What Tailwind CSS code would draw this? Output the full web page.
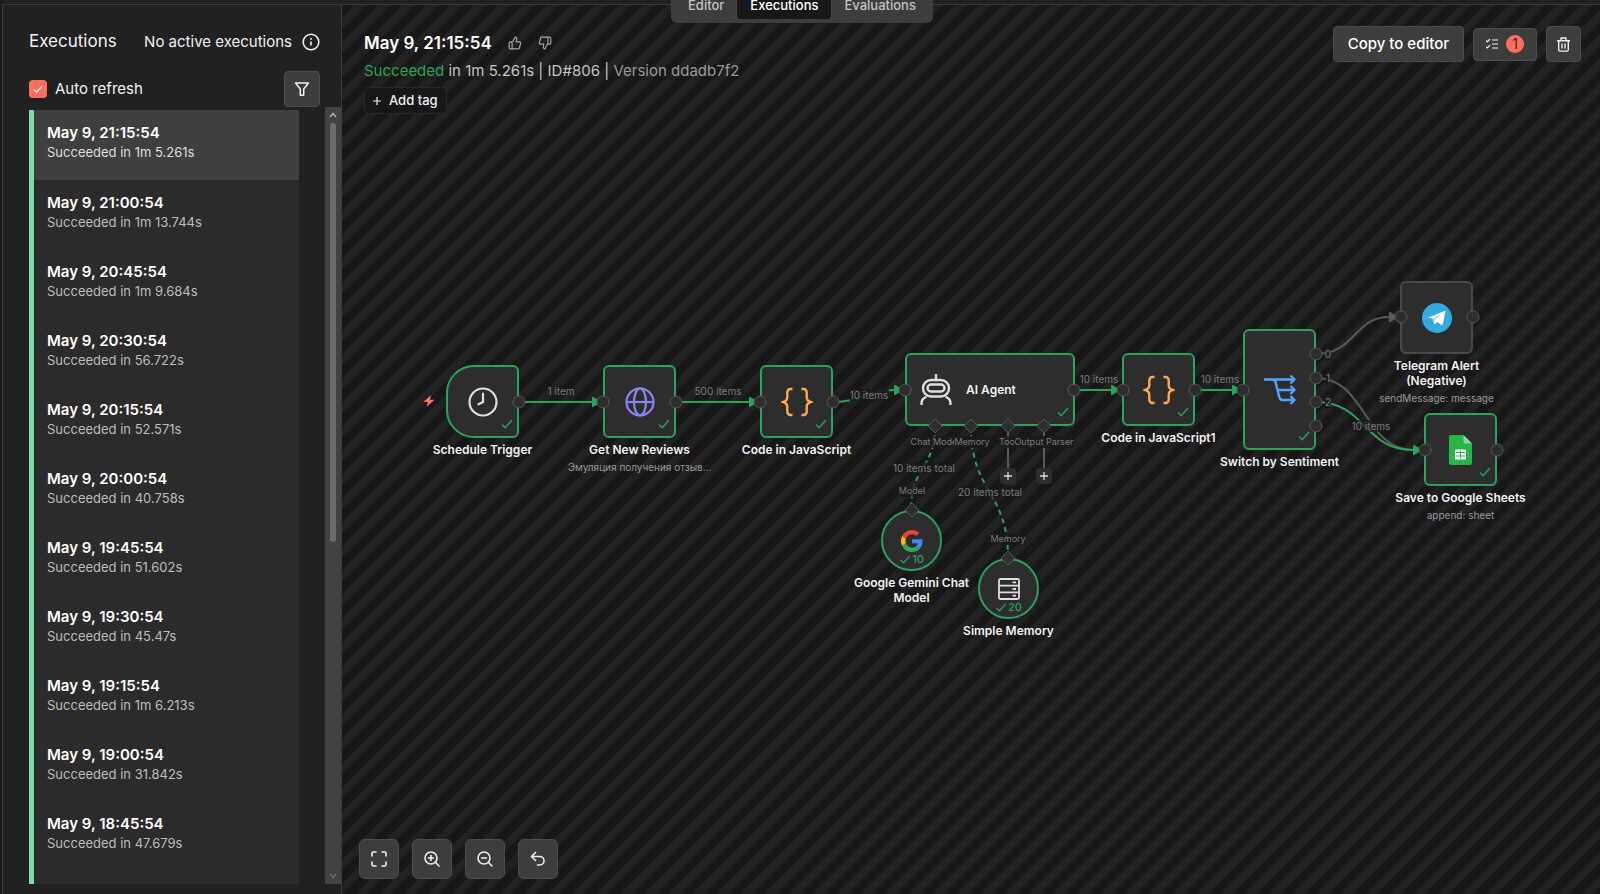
<!DOCTYPE html>
<html lang="en">
  <head>
    <meta charset="UTF-8" />
    <meta name="viewport" content="width=device-width, initial-scale=1.0" />
    <title>Executions</title>
    <script src="https://cdn.jsdelivr.net/npm/@tailwindcss/browser@4"></script>
  </head>
  <body
    class="h-screen overflow-hidden flex flex-col bg-[#212121] text-[#f0f0f0] font-['Inter',sans-serif] border-l-2 border-[#1b1b1b]"
  >
    <!-- icons shared by several elements -->
    <svg class="hidden">
      <symbol id="check" viewBox="0 0 12 12">
        <path d="M1 6.5l3.2 3.2L11 2" fill="none" stroke="currentColor" stroke-width="1.4" />
      </symbol>
      <symbol id="braces" viewBox="0 0 32 32">
        <path
          d="M11.5 3H9.5a3.2 3.2 0 0 0-3.2 3.2V11c0 2.5-1.3 4.2-4 5 2.7.8 4 2.500 4 5v4.8A3.2 3.2 0 0 0 9.5 29h2M20.5 3h2a3.2 3.2 0 0 1 3.2 3.2V11c0 2.5 1.3 4.2 4 5-2.7.8-4 2.5-4 5v4.8a3.2 3.2 0 0 1-3.2 3.2h-2"
          fill="none"
          stroke="currentColor"
          stroke-width="2.4"
        />
      </symbol>
    </svg>

    <header class="relative z-20 h-[5px] shrink-0 border-b border-[#3c3c3c]">
      <nav
        class="absolute bottom-[-19px] left-[669px] flex items-end rounded-md bg-[#3d3d3d] p-1 text-[13px] leading-5 font-medium text-[#c2c2c2]"
      >
        <a href="#editor" class="px-[13px] py-1">Editor</a>
        <a href="#executions" class="rounded bg-[#171717] px-[13px] py-1 text-white">Executions</a>
        <a href="#evaluations" class="px-[13px] py-1">Evaluations</a>
      </nav>
    </header>

    <div class="flex min-h-0 flex-1">
      <aside class="flex w-[340px] shrink-0 flex-col border-x border-[#3c3c3c] pb-[10px] pl-[26px]">
        <div class="mt-6 flex h-[26px] items-center justify-between pr-[21px]">
          <h1 class="text-[17px]">Executions</h1>
          <div class="flex items-center gap-2.5 text-[15px]">
            <span>No active executions</span>
            <svg class="size-[18px]" viewBox="0 0 18 18" fill="none" stroke="currentColor" stroke-width="1.6">
              <circle cx="9" cy="9" r="7.8" />
              <path d="M9 8.5v4M9 5v1.7" />
            </svg>
          </div>
        </div>

        <div class="mt-4 mb-[3px] flex h-9 items-center justify-between pr-[21px]">
          <label for="auto-refresh" class="flex items-center gap-2 text-[15px]">
            <span class="relative flex size-[18px]">
              <input
                type="checkbox"
                id="auto-refresh"
                checked
                class="size-[18px] appearance-none rounded bg-[#ff6f5c]"
              />
              <svg class="pointer-events-none absolute inset-1 size-2.5 text-white" viewBox="0 0 12 12">
                <path d="M1 6.5l3.2 3.2L11 2.5" fill="none" stroke="currentColor" stroke-width="1.5" />
              </svg>
            </span>
            Auto refresh
          </label>
          <button
            aria-label="Filter"
            class="flex size-9 items-center justify-center rounded border border-[#4d4d4d] bg-[#3d3d3d]"
          >
            <svg class="size-4" viewBox="0 0 16 16" fill="none" stroke="currentColor" stroke-width="1.5" stroke-linejoin="round">
              <path d="M1.500 2h13L9.700 8v6.200H6.300V8z" />
            </svg>
          </button>
        </div>

        <div class="flex min-h-0 flex-1 justify-between">
          <ul class="w-[270px] overflow-hidden border-l-[5px] border-[#7fdca4] bg-[#2b2b2b] text-[13px] leading-[18px] text-[#bdbdbd]">
            <li class="h-[70px] bg-[#3f3f3f] pt-[13px] pl-[13px] text-[#dedede]">
              <a href="#e806" class="block">
                <b class="block text-[15px] leading-5 font-semibold text-white">May 9, 21:15:54</b>
                <span class="block">Succeeded in 1m 5.261s</span>
              </a>
            </li>
            <li class="h-[69px] pt-[13px] pl-[13px]">
              <a href="#e805" class="block">
                <b class="block text-[15px] leading-5 font-semibold text-white">May 9, 21:00:54</b>
                <span class="block">Succeeded in 1m 13.744s</span>
              </a>
            </li>
            <li class="h-[69px] pt-[13px] pl-[13px]">
              <a href="#e804" class="block">
                <b class="block text-[15px] leading-5 font-semibold text-white">May 9, 20:45:54</b>
                <span class="block">Succeeded in 1m 9.684s</span>
              </a>
            </li>
            <li class="h-[69px] pt-[13px] pl-[13px]">
              <a href="#e803" class="block">
                <b class="block text-[15px] leading-5 font-semibold text-white">May 9, 20:30:54</b>
                <span class="block">Succeeded in 56.722s</span>
              </a>
            </li>
            <li class="h-[69px] pt-[13px] pl-[13px]">
              <a href="#e802" class="block">
                <b class="block text-[15px] leading-5 font-semibold text-white">May 9, 20:15:54</b>
                <span class="block">Succeeded in 52.571s</span>
              </a>
            </li>
            <li class="h-[69px] pt-[13px] pl-[13px]">
              <a href="#e801" class="block">
                <b class="block text-[15px] leading-5 font-semibold text-white">May 9, 20:00:54</b>
                <span class="block">Succeeded in 40.758s</span>
              </a>
            </li>
            <li class="h-[69px] pt-[13px] pl-[13px]">
              <a href="#e800" class="block">
                <b class="block text-[15px] leading-5 font-semibold text-white">May 9, 19:45:54</b>
                <span class="block">Succeeded in 51.602s</span>
              </a>
            </li>
            <li class="h-[69px] pt-[13px] pl-[13px]">
              <a href="#e799" class="block">
                <b class="block text-[15px] leading-5 font-semibold text-white">May 9, 19:30:54</b>
                <span class="block">Succeeded in 45.47s</span>
              </a>
            </li>
            <li class="h-[69px] pt-[13px] pl-[13px]">
              <a href="#e798" class="block">
                <b class="block text-[15px] leading-5 font-semibold text-white">May 9, 19:15:54</b>
                <span class="block">Succeeded in 1m 6.213s</span>
              </a>
            </li>
            <li class="h-[69px] pt-[13px] pl-[13px]">
              <a href="#e797" class="block">
                <b class="block text-[15px] leading-5 font-semibold text-white">May 9, 19:00:54</b>
                <span class="block">Succeeded in 31.842s</span>
              </a>
            </li>
            <li class="h-[69px] pt-[13px] pl-[13px]">
              <a href="#e796" class="block">
                <b class="block text-[15px] leading-5 font-semibold text-white">May 9, 18:45:54</b>
                <span class="block">Succeeded in 47.679s</span>
              </a>
            </li>
          </ul>
          <!-- scroll bar -->
          <div class="-mt-[3px] flex w-4 flex-col items-center justify-between bg-[#424242] py-1">
            <div class="flex h-[56%] w-full flex-col items-center gap-1">
              <svg class="h-2 w-2 shrink-0" viewBox="0 0 8 8" fill="none" stroke="#b0b0b0" stroke-width="1.5"><path d="M1 6l3-3.500L7 6" /></svg>
              <div class="w-1.5 flex-1 rounded-full bg-[#6b6b6b]"></div>
            </div>
            <svg class="h-2 w-2" viewBox="0 0 8 8" fill="none" stroke="#6b6b6b" stroke-width="1.5"><path d="M1 2l3 3.500L7 2" /></svg>
          </div>
        </div>
      </aside>

      <main
        class="relative flex min-w-0 flex-1 flex-col justify-between overflow-hidden bg-[repeating-linear-gradient(135deg,#171717_0px,#171717_9px,#212121_9px,#212121_17px)]"
      >
        <div class="relative z-10 flex items-start justify-between pt-[21px] pr-[19px] pl-[22px]">
          <div>
            <div class="mt-[3px] flex h-7 items-center">
              <h2 class="text-[17px] leading-7 font-semibold text-white">May 9, 21:15:54</h2>
              <button aria-label="Good run" class="ml-4 text-[#a8a8a8]">
                <svg class="size-3.5" viewBox="0 0 24 24" fill="none" stroke="currentColor" stroke-width="2" stroke-linejoin="round">
                  <path d="M7 10v12M15 5.88 14 10h5.83a2 2 0 0 1 1.92 2.56l-2.33 8A2 2 0 0 1 17.5 22H4a2 2 0 0 1-2-2v-8a2 2 0 0 1 2-2h2.76a2 2 0 0 0 1.79-1.11L12 2a3.13 3.13 0 0 1 3 3.88Z" />
                </svg>
              </button>
              <button aria-label="Bad run" class="ml-4 text-[#a8a8a8]">
                <svg class="size-3.5" viewBox="0 0 24 24" fill="none" stroke="currentColor" stroke-width="2" stroke-linejoin="round">
                  <path d="M17 14V2M9 18.12 10 14H4.17a2 2 0 0 1-1.92-2.56l2.33-8A2 2 0 0 1 6.5 2H20a2 2 0 0 1 2 2v8a2 2 0 0 1-2 2h-2.76a2 2 0 0 0-1.79 1.11L12 22a3.13 3.13 0 0 1-3-3.88Z" />
                </svg>
              </button>
            </div>
            <p class="text-[15px] leading-7 text-[#c4c4c4]">
              <span class="text-[#27a35a]">Succeeded</span> in 1m 5.261s | ID#806 |
              <span class="text-[#9a9a9a]">Version ddadb7f2</span>
            </p>
            <button
              class="mt-[2px] flex h-[27px] items-center gap-2 rounded border border-[#292929] bg-[#171717] px-2 text-[13px] font-medium"
            >
              <svg class="size-2" viewBox="0 0 8 8" stroke="currentColor" stroke-width="1.2"><path d="M4 0v8M0 4h8" /></svg>
              Add tag
            </button>
          </div>
          <div class="flex items-center gap-[9px]">
            <button class="h-9 rounded border border-[#4d4d4d] bg-[#3d3d3d] px-3.5 text-[15px] font-medium text-white">
              Copy to editor
            </button>
            <button
              aria-label="Annotations"
              class="flex h-[33px] w-16 items-center justify-center gap-2 rounded border border-[#4d4d4d] bg-[#3d3d3d]"
            >
              <svg class="size-3" viewBox="0 0 12 12" fill="none" stroke="currentColor" stroke-width="1.2">
                <path d="M0 2.500l1.300 1.300L4 1M0 8.700L1.300 10 4 7.200M6 2h6M6 6h6M6 10h6" />
              </svg>
              <span class="flex size-[18px] items-center justify-center rounded-full bg-[#ff6f5c] text-sm text-[#3d2320]">1</span>
            </button>
            <button
              aria-label="Delete"
              class="flex h-9 w-[35px] items-center justify-center rounded border border-[#4d4d4d] bg-[#3d3d3d]"
            >
              <svg class="size-[15px]" viewBox="0 0 15 15" fill="none" stroke="currentColor" stroke-width="1.4" stroke-linejoin="round">
                <path d="M1 3.700h13M5 3.500V1h5v2.500M2.700 3.700v9a1.400 1.400 0 0 0 1.400 1.400h6.800a1.400 1.400 0 0 0 1.400-1.400v-9M6 6.500v5M9 6.500v5" />
              </svg>
            </button>
          </div>
        </div>

        <!-- workflow canvas -->
        <section class="absolute inset-0 text-[10px] leading-3 text-[#7c7c7c]">
          <!-- connections -->
          <svg class="absolute inset-0 h-full w-full" fill="none" stroke-width="2">
            <defs>
              <marker id="arrow-green" viewBox="0 0 9 11" markerWidth="9" markerHeight="11" refX="0" refY="5.5" markerUnits="userSpaceOnUse" orient="0">
                <path d="M0 1q0-1.200 1-.6l7.200 4.200q1 .9 0 1.800L1 10.600q-1 .6-1-.6z" fill="#27a35a" stroke="none" />
              </marker>
              <marker id="arrow-gray" viewBox="0 0 9 11" markerWidth="9" markerHeight="11" refX="0" refY="5.5" markerUnits="userSpaceOnUse" orient="0">
                <path d="M0 1q0-1.200 1-.6l7.200 4.200q1 .9 0 1.800L1 10.600q-1 .6-1-.6z" fill="#5a5a5a" stroke="none" />
              </marker>
            </defs>
            <g stroke="#5a5a5a">
              <path d="M974 349C1013 349 1012 312 1047 312" marker-end="url(#arrow-gray)" />
              <path d="M974 373C1024 373 1022 445 1071 445" />
              <path d="M666 427v37M702 427v37" />
            </g>
            <g stroke="#27a35a">
              <path d="M177 397h73" marker-end="url(#arrow-green)" />
              <path d="M333 397h74" marker-end="url(#arrow-green)" />
              <path d="M491 397C521 397 523 385 552 385" marker-end="url(#arrow-green)" />
              <path d="M732 385h37" marker-end="url(#arrow-green)" />
              <path d="M853 385h37" marker-end="url(#arrow-green)" />
              <path d="M974 397C1024 397 1022 445 1071 445" marker-end="url(#arrow-green)" />
              <path d="M593 421C593 464 569 461 569 505M629 421C629 489 666 485 666 553" stroke-dasharray="5 4" />
            </g>
          </svg>

          <!-- labels on the connections -->
          <div class="absolute top-[380px] left-[219px] -translate-x-1/2 whitespace-nowrap">1 item</div>
          <div class="absolute top-[380px] left-[376px] -translate-x-1/2 whitespace-nowrap">500 items</div>
          <div class="absolute top-[384px] left-[527px] -translate-x-1/2 bg-[#1a1a1a]/90 whitespace-nowrap">10 items</div>
          <div class="absolute top-[368px] left-[757px] -translate-x-1/2 whitespace-nowrap">10 items</div>
          <div class="absolute top-[368px] left-[878px] -translate-x-1/2 whitespace-nowrap">10 items</div>
          <div class="absolute top-[415px] left-[1029px] -translate-x-1/2 bg-[#1a1a1a]/70 whitespace-nowrap">10 items</div>
          <div class="absolute top-[343px] left-[986px] -translate-x-1/2 bg-[#1a1a1a]/90">0</div>
          <div class="absolute top-[367px] left-[986px] -translate-x-1/2 bg-[#1a1a1a]/90">1</div>
          <div class="absolute top-[391px] left-[986px] -translate-x-1/2 bg-[#1a1a1a]/90">2</div>
          <div class="absolute top-[431px] left-[593px] -translate-x-1/2 bg-[#1a1a1a]/80 text-[9px] whitespace-nowrap">Chat Model</div>
          <div class="absolute top-[431px] left-[666px] -translate-x-1/2 bg-[#1a1a1a]/80 text-[9px] whitespace-nowrap">Tool</div>
          <div class="absolute top-[431px] left-[630px] -translate-x-1/2 bg-[#1a1a1a] text-[9px] whitespace-nowrap">Memory</div>
          <div class="absolute top-[431px] left-[702px] -translate-x-1/2 bg-[#1a1a1a] text-[9px] whitespace-nowrap">Output Parser</div>
          <div class="absolute top-[457px] left-[582px] -translate-x-1/2 bg-[#1a1a1a]/70 whitespace-nowrap">10 items total</div>
          <div class="absolute top-[480px] left-[570px] -translate-x-1/2 bg-[#1a1a1a]/70 text-[9px] whitespace-nowrap">Model</div>
          <div class="absolute top-[481px] left-[648px] -translate-x-1/2 bg-[#1a1a1a]/70 whitespace-nowrap">20 items total</div>
          <div class="absolute top-[528px] left-[666px] -translate-x-1/2 bg-[#1a1a1a]/70 text-[9px] whitespace-nowrap">Memory</div>

          <button aria-label="Add tool" class="absolute top-[463px] left-[658px] flex size-4 items-center justify-center rounded-sm bg-[#2d2d2d] text-[#dcdcdc]">
            <svg class="size-2" viewBox="0 0 8 8" stroke="currentColor" stroke-width="1.3"><path d="M4 0v8M0 4h8" /></svg>
          </button>
          <button aria-label="Add output parser" class="absolute top-[463px] left-[694px] flex size-4 items-center justify-center rounded-sm bg-[#2d2d2d] text-[#dcdcdc]">
            <svg class="size-2" viewBox="0 0 8 8" stroke="currentColor" stroke-width="1.3"><path d="M4 0v8M0 4h8" /></svg>
          </button>

          <!-- Schedule Trigger -->
          <svg class="absolute top-[390px] left-[81px] size-3" viewBox="0 0 12 12" fill="#ff6f5c"><path d="M8 0L.5 7h4.300L3.500 12l8-7.200H7z" /></svg>
          <div class="absolute top-[360px] left-[104px] flex size-[73px] items-center justify-center rounded-l-[28px] rounded-r-md border-2 border-[#27a35a] bg-[#2d2d2d]">
            <svg class="size-[30px]" viewBox="0 0 30 30" fill="none" stroke="#dedede" stroke-width="2.2" stroke-linecap="round">
              <circle cx="15" cy="15" r="13.5" />
              <path d="M15 6.500V15l-4.500 2.300" />
            </svg>
            <svg class="absolute right-1 bottom-1.5 size-3 text-[#27a35a]"><use href="#check" /></svg>
            <div class="absolute top-full left-1/2 mt-1.5 -translate-x-1/2 text-center text-xs leading-4 font-semibold whitespace-nowrap text-[#f0f0f0]">Schedule Trigger</div>
          </div>

          <!-- Get New Reviews -->
          <div class="absolute top-[360px] left-[261px] flex size-[73px] items-center justify-center rounded-md border-2 border-[#27a35a] bg-[#2d2d2d]">
            <svg class="size-[30px]" viewBox="0 0 30 30" fill="none" stroke="#8686f5" stroke-width="2.2">
              <circle cx="15" cy="15" r="13.5" />
              <ellipse cx="15" cy="15" rx="6" ry="13.5" />
              <path d="M1.500 15h27" />
            </svg>
            <svg class="absolute right-1 bottom-1.5 size-3 text-[#27a35a]"><use href="#check" /></svg>
            <div class="absolute top-full left-1/2 mt-1.5 -translate-x-1/2 text-center text-xs leading-4 font-semibold whitespace-nowrap text-[#f0f0f0]">
              Get New Reviews
              <div class="mt-[3px] text-[10px] leading-3 font-normal text-[#9a9a9a]">Эмуляция получения отзыв...</div>
            </div>
          </div>

          <!-- Code in JavaScript -->
          <div class="absolute top-[360px] left-[418px] flex size-[73px] items-center justify-center rounded-md border-2 border-[#27a35a] bg-[#2d2d2d]">
            <svg class="size-8 text-[#ffa94d]"><use href="#braces" /></svg>
            <svg class="absolute right-1 bottom-1.5 size-3 text-[#27a35a]"><use href="#check" /></svg>
            <div class="absolute top-full left-1/2 mt-1.5 -translate-x-1/2 text-center text-xs leading-4 font-semibold whitespace-nowrap text-[#f0f0f0]">Code in JavaScript</div>
          </div>

          <!-- AI Agent -->
          <div class="absolute top-[348px] left-[563px] flex h-[73px] w-[170px] items-center gap-[14px] rounded-md border-2 border-[#27a35a] bg-[#2d2d2d] pl-[13px]">
            <svg class="size-8" viewBox="0 0 32 32" fill="none" stroke="#dedede" stroke-width="2.4">
              <path d="M16 0v6M1.500 31v-1.500a7 7 0 0 1 5-6.700M30.500 31v-1.500a7 7 0 0 0-5-6.700" />
              <rect x="3" y="6" width="26" height="16.5" rx="8.2" />
              <rect x="7.5" y="10.5" width="17" height="7" rx="3.5" />
            </svg>
            <span class="text-xs leading-4 font-semibold text-[#f0f0f0]">AI Agent</span>
            <svg class="absolute right-1 bottom-1.5 size-3 text-[#27a35a]"><use href="#check" /></svg>
          </div>

          <!-- Code in JavaScript1 -->
          <div class="absolute top-[348px] left-[780px] flex size-[73px] items-center justify-center rounded-md border-2 border-[#27a35a] bg-[#2d2d2d]">
            <svg class="size-8 text-[#ffa94d]"><use href="#braces" /></svg>
            <svg class="absolute right-1 bottom-1.5 size-3 text-[#27a35a]"><use href="#check" /></svg>
            <div class="absolute top-full left-1/2 mt-1.5 -translate-x-1/2 text-center text-xs leading-4 font-semibold whitespace-nowrap text-[#f0f0f0]">Code in JavaScript1</div>
          </div>

          <!-- Switch by Sentiment -->
          <div class="absolute top-[324px] left-[901px] flex h-[121px] w-[73px] items-center justify-center rounded-md border-2 border-[#27a35a] bg-[#2d2d2d]">
            <svg class="size-8" viewBox="0 0 32 32" fill="none" stroke="#54a3ff" stroke-width="2.4" stroke-linejoin="round">
              <path d="M0 5.500h31M26.500 1.500l4 4-4 4M8 5.500q3 0 3.600 2.500l3.600 15q.7 3 3.500 3H31M13 16h18M26.500 12l4 4-4 4M26.500 22l4 4-4 4" />
            </svg>
            <svg class="absolute right-1 bottom-1.5 size-3 text-[#27a35a]"><use href="#check" /></svg>
            <div class="absolute top-full left-1/2 mt-1.5 -translate-x-1/2 text-center text-xs leading-4 font-semibold whitespace-nowrap text-[#f0f0f0]">Switch by Sentiment</div>
          </div>

          <!-- Telegram Alert -->
          <div class="absolute top-[276px] left-[1058px] flex size-[73px] items-center justify-center rounded-md border-2 border-[#484848] bg-[#2d2d2d]">
            <svg class="size-[30px]" viewBox="0 0 30 30">
              <circle cx="15" cy="15" r="15" fill="#34aadf" />
              <path d="M6 14.700L22.600 8.100q1-.3.8.9l-2.700 12.500q-.3 1.200-1.400.5l-4.200-3.100-2 2q-.7.6-.9-.4l-1.500-4.700-4.500-1.400q-.9-.3-.2-.7" fill="#fff" />
              <path d="M11 15.900l8.700-5.500-6.900 6.700-.4 3.500z" fill="#b9cfdf" />
            </svg>
            <div class="absolute top-full left-1/2 mt-1.5 -translate-x-1/2 text-center text-xs leading-[15px] font-semibold whitespace-nowrap text-[#f0f0f0]">
              Telegram Alert<br />(Negative)
              <div class="mt-1 text-[10px] leading-3 font-normal text-[#9a9a9a]">sendMessage: message</div>
            </div>
          </div>

          <!-- Save to Google Sheets -->
          <div class="absolute top-[408px] left-[1082px] flex size-[73px] items-center justify-center rounded-md border-2 border-[#27a35a] bg-[#2d2d2d]">
            <svg class="h-[30px] w-[23px]" viewBox="0 0 23 30">
              <path d="M2 0h12.500L23 8.500V28a2 2 0 0 1-2 2H2a2 2 0 0 1-2-2V2a2 2 0 0 1 2-2z" fill="#28b446" />
              <path d="M14.500 0L23 8.500h-7a1.500 1.500 0 0 1-1.500-1.500z" fill="#8ad99c" />
              <path d="M6 14.500h11v10H6z" fill="#fff" />
              <path d="M7 17.500h9M7 21h9M11.500 15.500v8" stroke="#28b446" stroke-width="1.1" />
            </svg>
            <svg class="absolute right-1 bottom-1.5 size-3 text-[#27a35a]"><use href="#check" /></svg>
            <div class="absolute top-full left-1/2 mt-1.5 -translate-x-1/2 text-center text-xs leading-4 font-semibold whitespace-nowrap text-[#f0f0f0]">
              Save to Google Sheets
              <div class="mt-[3px] text-[10px] leading-3 font-normal text-[#9a9a9a]">append: sheet</div>
            </div>
          </div>

          <!-- Google Gemini Chat Model -->
          <div class="absolute top-[505px] left-[539px] flex size-[61px] items-center justify-center rounded-full border-2 border-[#27a35a] bg-[#2d2d2d]">
            <svg class="size-[22px]" viewBox="0 0 48 48">
              <path fill="#EA4335" d="M24 9.500c3.540 0 6.710 1.220 9.210 3.600l6.850-6.850C35.900 2.380 30.470 0 24 0 14.620 0 6.510 5.380 2.560 13.220l7.980 6.190C12.430 13.720 17.740 9.500 24 9.500z" />
              <path fill="#4285F4" d="M46.980 24.550c0-1.570-.15-3.090-.38-4.550H24v9.020h12.940c-.58 2.960-2.260 5.480-4.780 7.180l7.730 6c4.510-4.180 7.090-10.360 7.090-17.650z" />
              <path fill="#FBBC05" d="M10.530 28.590c-.48-1.450-.76-2.990-.76-4.590s.27-3.140.76-4.590l-7.980-6.190C.92 16.460 0 20.120 0 24c0 3.880.92 7.540 2.560 10.780l7.970-6.190z" />
              <path fill="#34A853" d="M24 48c6.480 0 11.930-2.130 15.890-5.810l-7.730-6c-2.150 1.450-4.920 2.300-8.160 2.300-6.260 0-11.570-4.220-13.470-9.910l-7.980 6.190C6.510 42.620 14.620 48 24 48z" />
            </svg>
            <div class="absolute bottom-1 left-1/2 flex -translate-x-1/2 items-center gap-0.5 text-[11px] leading-3 font-medium text-[#27a35a]">
              <svg class="size-[11px]"><use href="#check" /></svg>10
            </div>
            <div class="absolute top-full left-1/2 mt-1.5 -translate-x-1/2 text-center text-xs leading-[15px] font-semibold whitespace-nowrap text-[#f0f0f0]">
              Google Gemini Chat<br />Model
            </div>
          </div>

          <!-- Simple Memory -->
          <div class="absolute top-[553px] left-[636px] flex size-[61px] items-center justify-center rounded-full border-2 border-[#27a35a] bg-[#2d2d2d]">
            <svg class="size-[22px]" viewBox="0 0 22 22" fill="none" stroke="#dedede" stroke-width="1.8">
              <rect x="1" y="1" width="20" height="20" rx="1.5" />
              <path d="M1 7.700h20M1 14.300h20M14.500 4.400h3.500M14.500 11h3.500M14.500 17.600h3.500" />
            </svg>
            <div class="absolute bottom-1 left-1/2 flex -translate-x-1/2 items-center gap-0.5 text-[11px] leading-3 font-medium text-[#27a35a]">
              <svg class="size-[11px]"><use href="#check" /></svg>20
            </div>
            <div class="absolute top-full left-1/2 mt-1.5 -translate-x-1/2 text-center text-xs leading-4 font-semibold whitespace-nowrap text-[#f0f0f0]">Simple Memory</div>
          </div>

          <!-- ports -->
          <svg class="pointer-events-none absolute inset-0 h-full w-full" fill="#2d2d2d" stroke="#565656">
            <circle cx="177" cy="397" r="6" />
            <circle cx="261" cy="397" r="6" />
            <circle cx="334" cy="397" r="6" />
            <circle cx="418" cy="397" r="6" />
            <circle cx="491" cy="397" r="6" />
            <circle cx="563" cy="385" r="6" />
            <circle cx="732" cy="385" r="6" />
            <circle cx="781" cy="385" r="6" />
            <circle cx="853" cy="385" r="6" />
            <circle cx="901" cy="385" r="6" />
            <circle cx="974" cy="349" r="6" />
            <circle cx="974" cy="373" r="6" />
            <circle cx="974" cy="397" r="6" />
            <circle cx="974" cy="421" r="6" />
            <circle cx="1059" cy="312" r="6" />
            <circle cx="1131" cy="312" r="6" />
            <circle cx="1083" cy="445" r="6" />
            <circle cx="1155" cy="445" r="6" />
            <path d="M593 414l7 7-7 7-7-7zM629 414l7 7-7 7-7-7zM666 414l7 7-7 7-7-7zM702 414l7 7-7 7-7-7z" />
            <path d="M570 498l7 7-7 7-7-7zM666 546l7 7-7 7-7-7z" />
          </svg>
        </section>

        <!-- canvas controls -->
        <div class="relative z-10 flex gap-[13px] pb-[15px] pl-[17px]">
          <button aria-label="Fit view" class="flex size-10 items-center justify-center rounded-md border border-[#4d4d4d] bg-[#3d3d3d]">
            <svg class="size-4" viewBox="0 0 16 16" fill="none" stroke="currentColor" stroke-width="1.6" stroke-linecap="round">
              <path d="M1 5V2.500A1.500 1.500 0 0 1 2.500 1H5M11 1h2.500A1.500 1.500 0 0 1 15 2.500V5M15 11v2.500a1.500 1.500 0 0 1-1.500 1.500H11M5 15H2.500A1.500 1.500 0 0 1 1 13.500V11" />
            </svg>
          </button>
          <button aria-label="Zoom in" class="flex size-10 items-center justify-center rounded-md border border-[#4d4d4d] bg-[#3d3d3d]">
            <svg class="size-4" viewBox="0 0 16 16" fill="none" stroke="currentColor" stroke-width="1.6" stroke-linecap="round">
              <circle cx="7" cy="7" r="6" />
              <path d="M11.300 11.300L15 15M7 4.600v4.800M4.600 7h4.800" />
            </svg>
          </button>
          <button aria-label="Zoom out" class="flex size-10 items-center justify-center rounded-md border border-[#4d4d4d] bg-[#3d3d3d]">
            <svg class="size-4" viewBox="0 0 16 16" fill="none" stroke="currentColor" stroke-width="1.6" stroke-linecap="round">
              <circle cx="7" cy="7" r="6" />
              <path d="M11.300 11.300L15 15M4.600 7h4.800" />
            </svg>
          </button>
          <button aria-label="Reset zoom" class="flex size-10 items-center justify-center rounded-md border border-[#4d4d4d] bg-[#3d3d3d]">
            <svg class="size-4" viewBox="0 0 16 16" fill="none" stroke="currentColor" stroke-width="1.6" stroke-linecap="round" stroke-linejoin="round">
              <path d="M5.500 1.500L1.500 5.500l4 4M1.500 5.500h8.300a4.200 4.200 0 0 1 0 8.500H7.500" />
            </svg>
          </button>
        </div>
      </main>
    </div>
  </body>
</html>
